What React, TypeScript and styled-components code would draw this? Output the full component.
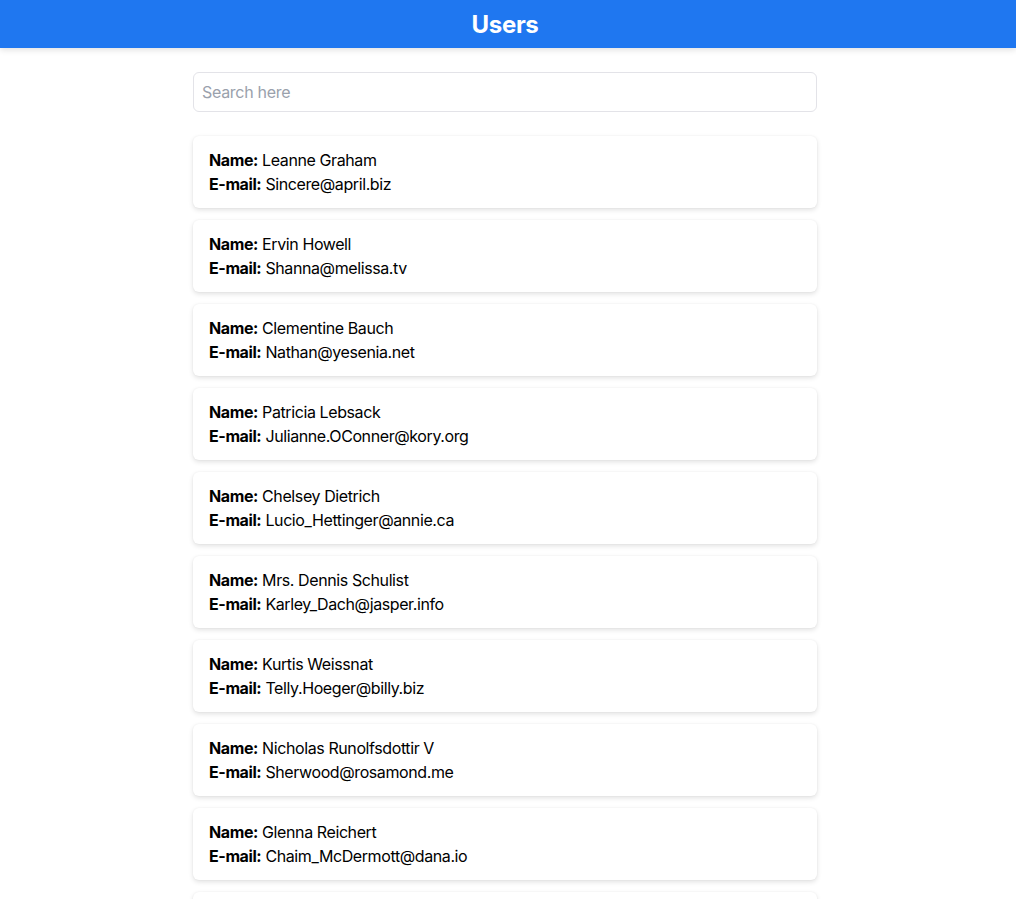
import React from "react";
import styled, { createGlobalStyle } from "styled-components";

const GlobalStyle = createGlobalStyle`
  * { box-sizing: border-box; }
  html, body { margin: 0; padding: 0; background: #ffffff; }
  body { font-family: Inter, "Noto Sans", "Liberation Sans", sans-serif; color: #000; }
`;

const Page = styled.div`
  padding-right: 6px;
`;

const Header = styled.header`
  height: 48px;
  background: #1f77f0;
  display: flex;
  align-items: center;
  justify-content: center;
  box-shadow: 0 2px 6px rgba(0, 0, 0, 0.12);
  margin-right: -6px;
  padding-right: 6px;
`;

const Title = styled.h1`
  margin: 0;
  color: #ffffff;
  font-size: 24px;
  font-weight: 700;
  letter-spacing: -0.3px;
`;

const Main = styled.main`
  width: 624px;
  margin: 24px auto 0;
  display: flex;
  flex-direction: column;
`;

const Search = styled.input`
  height: 40px;
  width: 100%;
  border: 1px solid #e3e3e8;
  border-radius: 6px;
  padding: 0 8px;
  font-family: inherit;
  font-size: 16px;
  letter-spacing: -0.3px;
  color: #111;
  outline: none;
  margin-bottom: 24px;
  &::placeholder { color: #9aa1ac; }
`;

const List = styled.div`
  display: flex;
  flex-direction: column;
  gap: 12px;
`;

const Card = styled.div`
  background: #fff;
  border-radius: 6px;
  padding: 12px 16px;
  box-shadow: 0 2px 5px rgba(0, 0, 0, 0.12), 0 0 2px rgba(0, 0, 0, 0.05);
`;

const Line = styled.div`
  font-size: 16px;
  line-height: 24px;
  letter-spacing: -0.4px;
  color: #000;
`;

const Label = styled.b`
  font-weight: 700;
`;

const users = [
  ["Leanne Graham", "Sincere@april.biz"],
  ["Ervin Howell", "Shanna@melissa.tv"],
  ["Clementine Bauch", "Nathan@yesenia.net"],
  ["Patricia Lebsack", "Julianne.OConner@kory.org"],
  ["Chelsey Dietrich", "Lucio_Hettinger@annie.ca"],
  ["Mrs. Dennis Schulist", "Karley_Dach@jasper.info"],
  ["Kurtis Weissnat", "Telly.Hoeger@billy.biz"],
  ["Nicholas Runolfsdottir V", "Sherwood@rosamond.me"],
  ["Glenna Reichert", "Chaim_McDermott@dana.io"],
  ["Clementina DuBuque", "Rey.Padberg@karina.biz"],
];

export default function App() {
  return (
    <Page>
      <GlobalStyle />
      <Header>
        <Title>Users</Title>
      </Header>
      <Main>
        <Search placeholder="Search here" />
        <List>
          {users.map(([name, email]) => (
            <Card key={email}>
              <Line>
                <Label>Name:</Label> {name}
              </Line>
              <Line>
                <Label>E-mail:</Label> {email}
              </Line>
            </Card>
          ))}
        </List>
      </Main>
    </Page>
  );
}
